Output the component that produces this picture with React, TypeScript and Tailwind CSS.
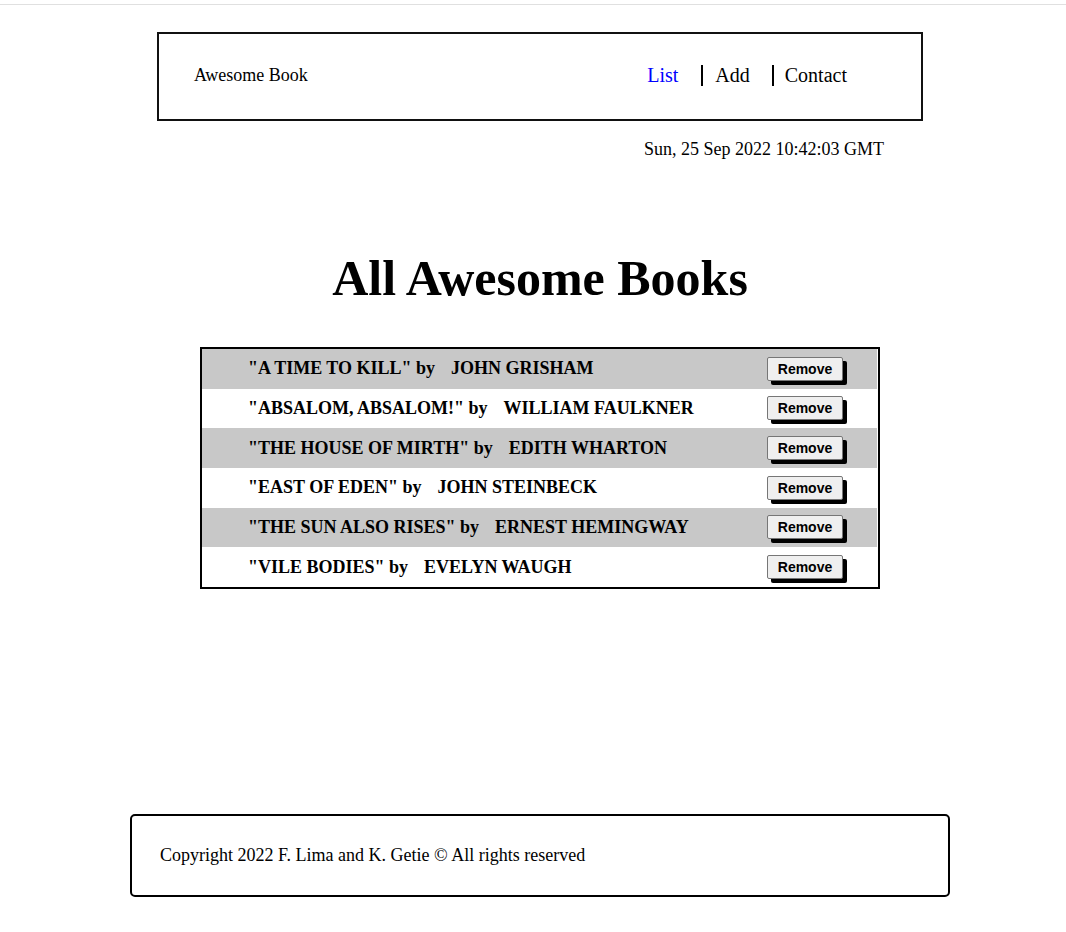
import React from "react";

const books = [
  { title: '"A TIME TO KILL" by', author: "JOHN GRISHAM" },
  { title: '"ABSALOM, ABSALOM!" by', author: "WILLIAM FAULKNER" },
  { title: '"THE HOUSE OF MIRTH" by', author: "EDITH WHARTON" },
  { title: '"EAST OF EDEN" by', author: "JOHN STEINBECK" },
  { title: '"THE SUN ALSO RISES" by', author: "ERNEST HEMINGWAY" },
  { title: '"VILE BODIES" by', author: "EVELYN WAUGH" },
];

export default function App() {
  return (
    <div className="min-h-[932px] bg-white text-black font-['Liberation_Serif',serif] pt-[4px]">
      <div className="h-px bg-[#e0e0e0]" />
      <div className="pl-[14px] flex flex-col items-center">
        <header className="mt-[27px] w-[766px] h-[89px] border-2 border-[#111] flex items-center justify-between pb-[3px]">
          <div className="pl-[35px] text-[18px]">Awesome Book</div>
          <nav className="flex items-center pr-[74px] text-[20px] leading-[21px]">
            <span className="text-[#0000ff] mr-[23px]">List</span>
            <span className="border-l-2 border-black pl-[12px] mr-[22px]">Add</span>
            <span className="border-l-2 border-black pl-[11px]">Contact</span>
          </nav>
        </header>
        <div className="w-[766px] text-right pr-[39px] mt-[18px] text-[18px] leading-[20px]">
          Sun, 25 Sep 2022 10:42:03 GMT
        </div>
        <h1 className="mt-[91px] text-[50px] leading-[56px] font-bold">All Awesome Books</h1>
        <div className="mt-[41px] w-[680px] border-2 border-black">
          {books.map((b, i) => (
            <div
              key={i}
              className={`h-[39.67px] mr-px flex items-center justify-between pl-[46px] pr-[34px] ${
                i % 2 === 0 ? "bg-[#c8c8c8]" : "bg-white"
              }`}
            >
              <div className="flex items-center gap-[16px] font-bold text-[18px] leading-[20px] -mt-[1px]">
                <span>{b.title}</span>
                <span>{b.author}</span>
              </div>
              <button className="w-[76px] h-[24px] bg-[#efefef] border border-[#767676] rounded-[2px] shadow-[4px_4px_0_#000] font-['Liberation_Sans',Arial,sans-serif] font-bold text-[14px] leading-none flex items-center justify-center">
                Remove
              </button>
            </div>
          ))}
        </div>
        <footer className="mt-[225px] w-[820px] h-[83px] border-2 border-black rounded-[5px] flex items-center pl-[28px] text-[18px]">
          Copyright 2022 F. Lima and K. Getie © All rights reserved
        </footer>
      </div>
    </div>
  );
}
